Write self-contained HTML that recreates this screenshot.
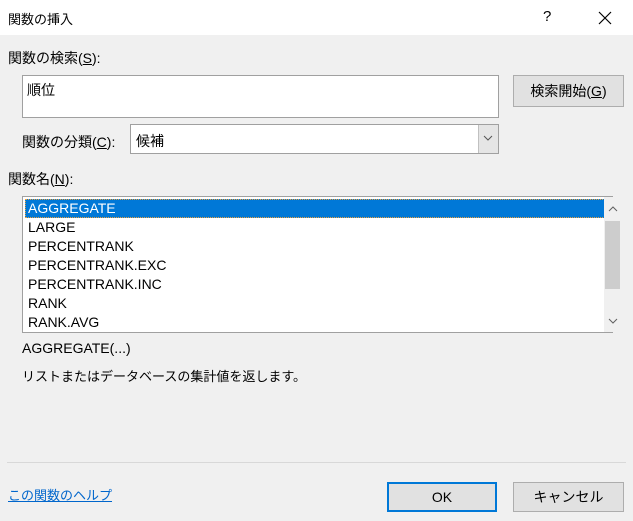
<!DOCTYPE html>
<html><head><meta charset="utf-8"><style>
*{margin:0;padding:0;box-sizing:border-box}
body{width:633px;height:521px;background:#f0f0f0;font-family:"Liberation Sans","Noto Sans CJK JP",sans-serif;font-size:14px;color:#000;position:relative;overflow:hidden}
.a{position:absolute;white-space:nowrap}
.title{left:0;top:0;width:633px;height:35px;background:#fff}
u{text-decoration:underline}
.btn{position:absolute;background:#e1e1e1;border:1px solid #adadad;text-align:center}
.row{position:absolute;left:2px;width:580px;height:19px;line-height:19px;padding-left:3px}
</style></head><body>
<div class="a title"></div>
<div class="a" style="left:8px;top:9px;font-size:13px">関数の挿入</div>
<div class="a" style="left:543px;top:8px;font-size:15px">?</div>
<svg class="a" style="left:598px;top:11px" width="14" height="14"><path d="M1 1L13 13M13 1L1 13" stroke="#000" stroke-width="1.2"/></svg>
<div class="a" style="left:8px;top:48px">関数の検索(<u>S</u>):</div>
<div class="a" style="left:22px;top:75px;width:477px;height:43px;background:#fff;border:1px solid #a0a0a0"></div>
<div class="a" style="left:27px;top:80px">順位</div>
<div class="btn" style="left:513px;top:75px;width:111px;height:32px;line-height:30px">検索開始(<u>G</u>)</div>
<div class="a" style="left:22px;top:132px">関数の分類(<u>C</u>):</div>
<div class="a" style="left:130px;top:124px;width:369px;height:30px;background:#fff;border:1px solid #a0a0a0"></div>
<div class="a" style="left:478px;top:125px;width:20px;height:28px;background:#e5e5e5;border-left:1px solid #c0c0c0"></div>
<svg class="a" style="left:483px;top:135px" width="10" height="6"><path d="M1 1L5 5L9 1" stroke="#555" fill="none"/></svg>
<div class="a" style="left:136px;top:131px">候補</div>
<div class="a" style="left:8px;top:169px">関数名(<u>N</u>):</div>
<div class="a" style="left:22px;top:196px;width:591px;height:137px;background:#fff;border:1px solid #a0a0a0">
<div class="row" style="top:2px;background:#0078d7;color:#fff;outline:1px dotted #e8a040;outline-offset:-1px">AGGREGATE</div>
<div class="row" style="top:21px">LARGE</div>
<div class="row" style="top:40px">PERCENTRANK</div>
<div class="row" style="top:59px">PERCENTRANK.EXC</div>
<div class="row" style="top:78px">PERCENTRANK.INC</div>
<div class="row" style="top:97px">RANK</div>
<div class="row" style="top:116px">RANK.AVG</div>
<div class="a" style="left:581px;top:0;width:17px;height:135px;background:#f0f0f0"></div>
<div class="a" style="left:582px;top:24px;width:15px;height:68px;background:#cdcdcd"></div>
<svg class="a" style="left:585px;top:9px" width="10" height="6"><path d="M1 5L5 1L9 5" stroke="#606060" fill="none"/></svg>
<svg class="a" style="left:585px;top:121px" width="10" height="6"><path d="M1 1L5 5L9 1" stroke="#606060" fill="none"/></svg>
</div>
<div class="a" style="left:22px;top:340px">AGGREGATE(...)</div>
<div class="a" style="left:22px;top:366px;font-size:13px">リストまたはデータベースの集計値を返します。</div>
<div class="a" style="left:7px;top:462px;width:619px;height:1px;background:#d8d8d8"></div>
<div class="a" style="left:8px;top:485px;color:#0066cc;text-decoration:underline;font-size:13px">この関数のヘルプ</div>
<div class="btn" style="left:387px;top:482px;width:110px;height:30px;line-height:26px;border:2px solid #0078d7">OK</div>
<div class="btn" style="left:513px;top:482px;width:111px;height:30px;line-height:28px">キャンセル</div>
</body></html>
